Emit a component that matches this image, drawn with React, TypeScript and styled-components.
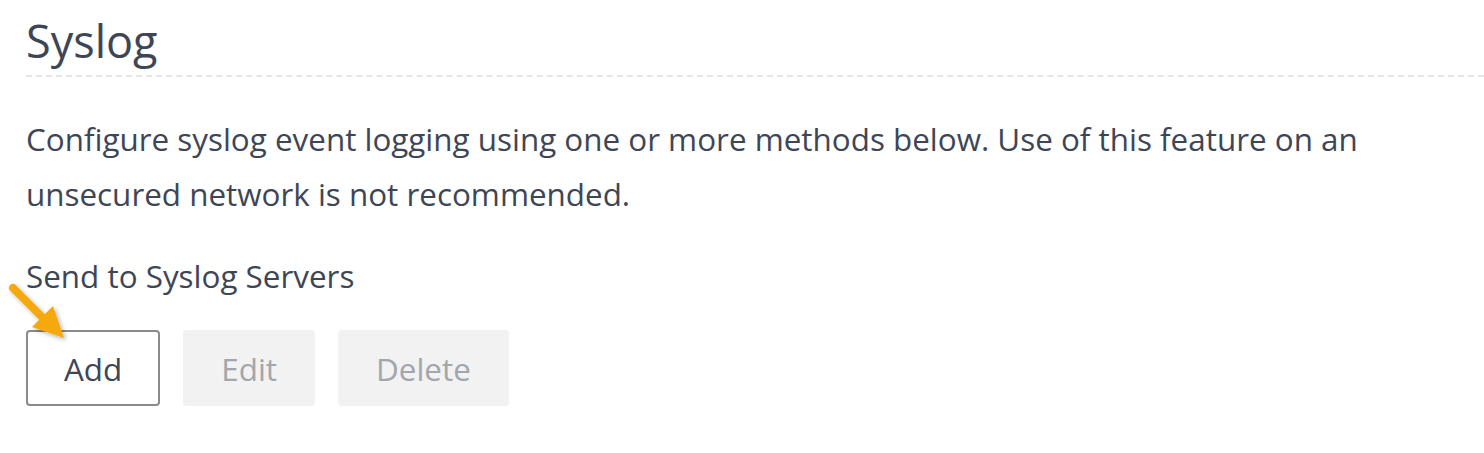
import styled, { createGlobalStyle } from 'styled-components'

const GlobalStyle = createGlobalStyle`
  html, body {
    margin: 0;
    padding: 0;
    background: #ffffff;
  }
  body {
    font-family: "Open Sans", "Noto Sans", sans-serif;
    color: #3e4656;
  }
`

const Page = styled.div`
  position: relative;
  padding: 0 0 0 26px;
  width: 1484px;
  height: 453px;
  box-sizing: border-box;
  overflow: hidden;
`

const Title = styled.h1`
  margin: 0;
  padding-top: 15px;
  padding-bottom: 8px;
  font-size: 45px;
  font-weight: 400;
  line-height: 52px;
  border-bottom: 2px dashed #e6e6e6;
`

const Intro = styled.p`
  margin: 0;
  padding-top: 34px;
  font-size: 31.4px;
  line-height: 55px;
  max-width: 1400px;
`

const Label = styled.div`
  margin-top: 35px;
  font-size: 31.4px;
  line-height: 40px;
`

const Toolbar = styled.div`
  display: flex;
  gap: 23px;
  margin-top: 34px;
`

const Button = styled.button<{ $disabled?: boolean }>`
  height: 76px;
  padding: 0 36px;
  font-family: inherit;
  font-size: 31.4px;
  border-radius: 4px;
  box-sizing: border-box;
  color: ${p => (p.$disabled ? '#a2a6ad' : '#3e4656')};
  background: ${p => (p.$disabled ? '#f2f2f2' : '#ffffff')};
  border: 2px solid ${p => (p.$disabled ? '#f2f2f2' : '#8a8a8a')};
`

const Arrow = styled.svg`
  position: absolute;
  left: 4px;
  top: 280px;
  overflow: visible;
`

export default function App() {
  return (
    <>
      <GlobalStyle />
      <Page>
        <Title>Syslog</Title>
        <Intro>
          Configure syslog event logging using one or more methods below. Use of this feature on an
          unsecured network is not recommended.
        </Intro>
        <Label>Send to Syslog Servers</Label>
        <Toolbar>
          <Button>Add</Button>
          <Button $disabled>Edit</Button>
          <Button $disabled>Delete</Button>
        </Toolbar>
        <Arrow width="70" height="70" viewBox="0 0 70 70">
          <defs>
            <filter id="sh" x="-50%" y="-50%" width="200%" height="200%">
              <feDropShadow dx="2" dy="2" stdDeviation="2" floodColor="#000" floodOpacity="0.3" />
            </filter>
          </defs>
          <g filter="url(#sh)">
            <line x1="9" y1="8" x2="40" y2="39" stroke="#f5a90f" strokeWidth="8" strokeLinecap="round" />
            <polygon points="60,58 28,47 49,26" fill="#f5a90f" />
          </g>
        </Arrow>
      </Page>
    </>
  )
}
